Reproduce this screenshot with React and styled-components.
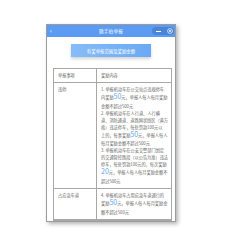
import React from 'react';
import styled, { createGlobalStyle } from 'styled-components';

const GlobalStyle = createGlobalStyle`
    html, body {
        margin: 0;
        padding: 0;
        background: #ffffff;
    }
    body {
        font-family: "Noto Sans CJK SC", "Noto Sans", sans-serif;
    }
`;

const Page = styled.div`
    width: 244px;
    height: 240px;
    padding: 24px 0 0 46px;
    box-sizing: border-box;
`;

const Phone = styled.div`
    width: 130px;
    height: 198px;
    box-sizing: border-box;
    border: 1px solid #9c9c9c;
    box-shadow: 2px 2px 4px rgba(0, 0, 0, 0.3);
    background: #ffffff;
    overflow: hidden;
`;

const NavBar = styled.div`
    height: 12px;
    background: #5b9cf2;
    display: grid;
    grid-template-columns: 1fr auto 1fr;
    align-items: center;
    color: #ffffff;
`;

const Back = styled.span`
    font-size: 6px;
    line-height: 1;
    padding-left: 3px;
`;

const Title = styled.span`
    font-size: 4.6px;
    letter-spacing: 0.2px;
`;

const Capsule = styled.div`
    justify-self: end;
    margin-right: 1px;
    width: 22px;
    height: 8px;
    border-radius: 4px;
    background: rgba(40, 90, 170, 0.35);
    display: flex;
    align-items: center;
    justify-content: space-between;
    padding: 0 1px 0 4px;
    box-sizing: border-box;
`;

const Dots = styled.span`
    width: 5px;
    height: 1px;
    background: #ffffff;
`;

const RewardButton = styled.div`
    width: 80px;
    height: 13px;
    margin: 7px auto 0;
    background: linear-gradient(90deg, #86bdf8, #6aa9f4);
    color: #ffffff;
    font-size: 4.4px;
    display: flex;
    align-items: center;
    justify-content: center;
    box-shadow: 0 2px 3px rgba(0, 0, 0, 0.18);
`;

const Table = styled.div`
    margin: 11px 3px 0 6px;
    border: 1px solid #a8a8a8;
    display: grid;
    grid-template-columns: 43px 1fr;
    color: #666666;
    font-size: 4.2px;
`;

const Cell = styled.div`
    border-right: ${p => (p.$first ? '1px solid #a8a8a8' : 'none')};
    border-bottom: 1px solid #a8a8a8;
    padding: ${p => (p.$head ? '0 4px' : '3px 3px 3.5px 4px')};
    height: ${p => (p.$head ? '13px' : 'auto')};
    display: ${p => (p.$head ? 'flex' : 'block')};
    align-items: center;
    line-height: 7px;
    white-space: nowrap;
`;

const TextLine = styled.div`
    height: ${p => (p.$tall ? '9.6px' : '7px')};
    line-height: ${p => (p.$tall ? '9.6px' : '7px')};
    overflow: visible;
`;

const Big = styled.span`
    color: #62a8ee;
    font-size: 7px;
    line-height: 1;
`;

const rows = [
    {
        name: '违停',
        lines: [
            ['1. 举报机动车在公交站点违规停车'],
            ['内奖励', '50', '元，举报人每人每月奖励'],
            ['金额不超过500元'],
            ['2. 举报机动车在人行道、人行横'],
            ['道、消防通道、道路网状线区（黄方'],
            ['格）违法停车，每处罚款100元以'],
            ['上的，每事奖励', '50', '元，举报人每人'],
            ['每月奖励金额不超过500元'],
            ['3. 举报机动车在公安交警部门划定'],
            ['的交通管控路段（以公告为准）违法'],
            ['停车，每处罚款100元的，每次奖励'],
            ['', '20', '元，举报人每人每月奖励金额不'],
            ['超过500元'],
        ],
    },
    {
        name: '占应急车道',
        lines: [
            ['4. 举报机动车占用应急车道通行的'],
            ['奖励', '50', '元，举报人每人每月奖励金'],
            ['额不超过500元'],
        ],
    },
];

const Line = ({ parts }) => (
    <TextLine $tall={!!parts[1]}>
        {parts[0]}
        {parts[1] && <Big>{parts[1]}</Big>}
        {parts[2]}
    </TextLine>
);

export default function App() {
    return (
        <Page>
            <GlobalStyle />
            <Phone>
                <NavBar>
                    <Back>‹</Back>
                    <Title>随手拍举报</Title>
                    <Capsule>
                        <Dots />
                        <svg width="6" height="6" viewBox="0 0 6 6">
                            <circle cx="3" cy="3" r="2.4" fill="none" stroke="#fff" strokeWidth="0.7" />
                            <circle cx="3" cy="3" r="0.9" fill="#fff" />
                        </svg>
                    </Capsule>
                </NavBar>
                <RewardButton>有奖举报范围及奖励金额</RewardButton>
                <Table>
                    <Cell $first $head>举报事项</Cell>
                    <Cell $head>奖励内容</Cell>
                    {rows.map(row => (
                        <React.Fragment key={row.name}>
                            <Cell $first>{row.name}</Cell>
                            <Cell>
                                {row.lines.map((l, i) => <Line key={i} parts={l} />)}
                            </Cell>
                        </React.Fragment>
                    ))}
                </Table>
            </Phone>
        </Page>
    );
}
